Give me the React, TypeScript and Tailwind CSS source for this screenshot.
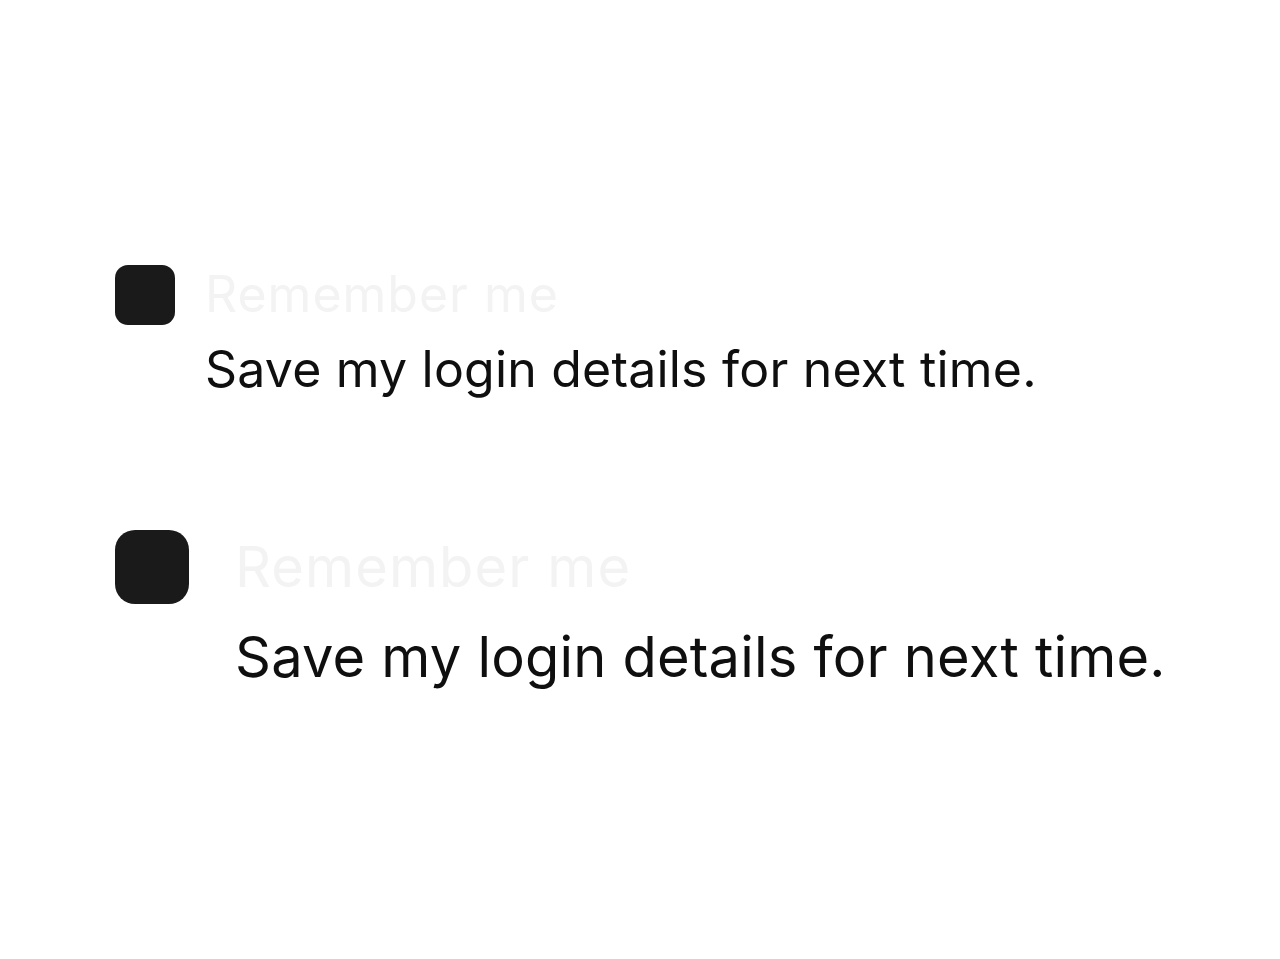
import React from "react";

type Size = "md" | "lg";

const sizes: Record<Size, { box: string; gap: string; text: string; label: string; desc: string }> = {
  md: {
    box: "w-[60px] h-[60px] rounded-[13px] mt-[8px]",
    gap: "gap-[30px]",
    text: "text-[50px] leading-[75px]",
    label: "tracking-[1px]",
    desc: "tracking-[0.2px]",
  },
  lg: {
    box: "w-[74px] h-[74px] rounded-[20px] mt-[7px]",
    gap: "gap-[46px]",
    text: "text-[56px] leading-[84px]",
    label: "tracking-[1.1px] mt-[2px]",
    desc: "tracking-[0.2px] mt-[6px]",
  },
};

const RememberMe: React.FC<{ size: Size }> = ({ size }) => {
  const s = sizes[size];
  return (
    <label className={`flex items-start ${s.gap}`}>
      <span className={`shrink-0 bg-[#1a1a1a] ${s.box}`} />
      <span className={`flex flex-col ${s.text}`}>
        <span className={`text-[#f3f3f3] ${s.label}`}>Remember me</span>
        <span className={`text-[#0f0f0f] ${s.desc}`}>Save my login details for next time.</span>
      </span>
    </label>
  );
};

export default function App() {
  return (
    <div
      className="min-h-[959px] bg-white pl-[115px] pt-[257px] flex flex-col gap-[116px]"
      style={{ fontFamily: "Inter, 'Noto Sans', sans-serif" }}
    >
      <RememberMe size="md" />
      <RememberMe size="lg" />
    </div>
  );
}
